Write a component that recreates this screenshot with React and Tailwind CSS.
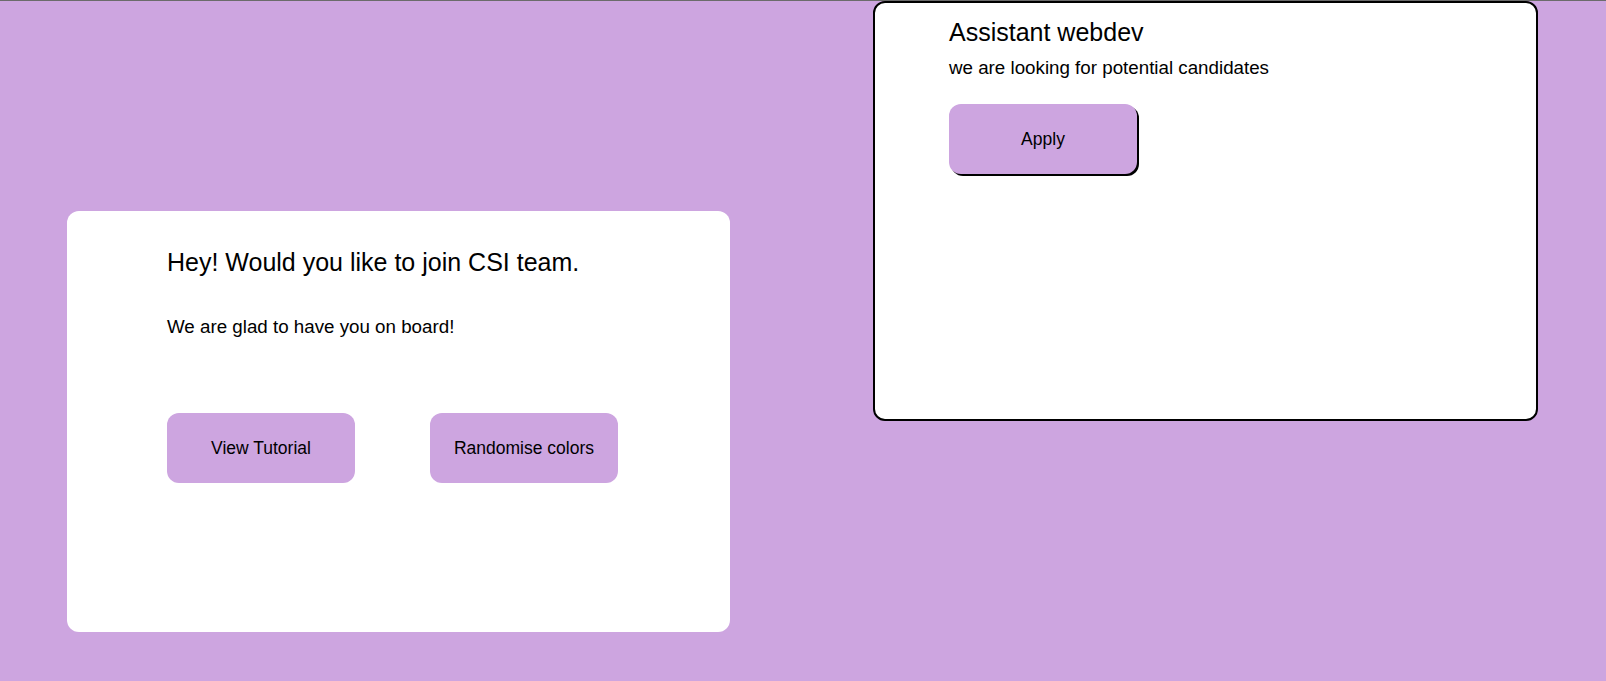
import React from 'react'

const Btn = ({ children, raised }) => (
  <button
    className={`w-[188px] h-[70px] rounded-xl bg-[#cda5e0] text-black text-[17.5px] ${raised ? 'shadow-[2px_2px_0_#000] w-[186px]' : ''}`}
  >
    {children}
  </button>
)

export default function App() {
  return (
    <div className="h-[681px] overflow-hidden bg-[#cda5e0] border-t border-[#6b6b6b] font-['Liberation_Sans',Arial,sans-serif] text-black">
      <div className="flex items-start pl-[67px]">
        {/* join card */}
        <div className="mt-[210px] w-[663px] h-[421px] bg-white rounded-xl pl-[100px] pt-[37px]">
          <h2 className="text-[25px] leading-[29px]">Hey! Would you like to join CSI team.</h2>
          <p className="mt-[39px] text-[18.75px] leading-[22px]">We are glad to have you on board!</p>
          <div className="mt-[75px] flex gap-[75px]">
            <Btn>View Tutorial</Btn>
            <Btn>Randomise colors</Btn>
          </div>
        </div>

        {/* job card */}
        <div className="ml-[143px] mt-0 w-[665px] h-[420px] bg-white border-2 border-black rounded-xl pl-[74px] pt-[15px]">
          <h2 className="text-[25px] leading-[29px]">Assistant webdev</h2>
          <p className="mt-[10px] text-[18.75px] leading-[22px]">we are looking for potential candidates</p>
          <div className="mt-[25px]">
            <Btn raised>Apply</Btn>
          </div>
        </div>
      </div>
    </div>
  )
}
